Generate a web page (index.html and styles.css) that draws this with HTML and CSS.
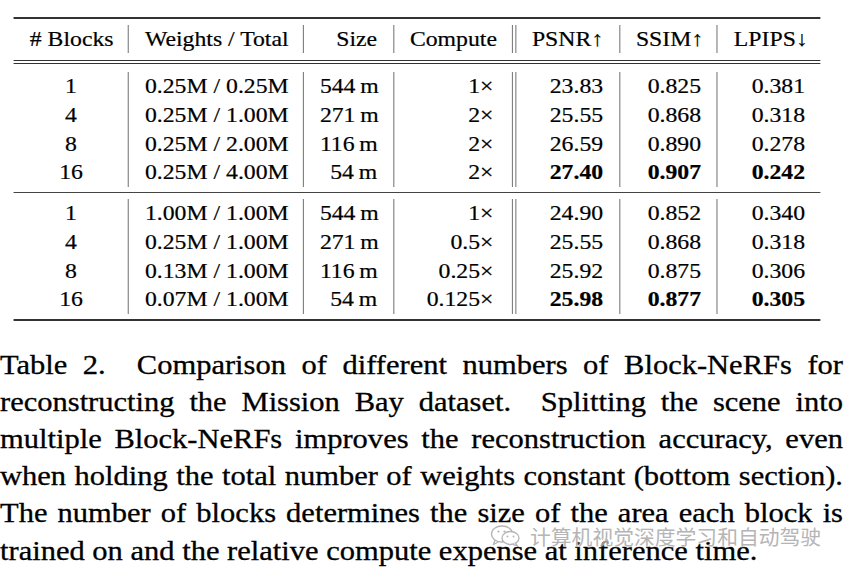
FILE: index.html
```html
<!DOCTYPE html>
<html lang="en">
<head>
<meta charset="utf-8">
<title>Table 2</title>
<link rel="stylesheet" href="styles.css">
</head>
<body>
<div class="page">
  <div class="tbl">
    <div class="rule-top"></div>
    <div class="sect sect-head">
      <div class="row">
        <div class="c c1">#&nbsp;Blocks</div>
        <div class="c c2">Weights / Total</div>
        <div class="c c3">Size</div>
        <div class="c c4">Compute</div>
        <div class="c c5">PSNR↑</div>
        <div class="c c6">SSIM↑</div>
        <div class="c c7">LPIPS↓</div>
      </div>
    </div>
    <div class="rule-double"></div>
    <div class="sect sect-a">
      <div class="row">
        <div class="c c1">1</div><div class="c c2">0.25M / 0.25M</div><div class="c c3">544&#8201;m</div><div class="c c4">1×</div><div class="c c5">23.83</div><div class="c c6">0.825</div><div class="c c7">0.381</div>
      </div>
      <div class="row">
        <div class="c c1">4</div><div class="c c2">0.25M / 1.00M</div><div class="c c3">271&#8201;m</div><div class="c c4">2×</div><div class="c c5">25.55</div><div class="c c6">0.868</div><div class="c c7">0.318</div>
      </div>
      <div class="row">
        <div class="c c1">8</div><div class="c c2">0.25M / 2.00M</div><div class="c c3">116&#8201;m</div><div class="c c4">2×</div><div class="c c5">26.59</div><div class="c c6">0.890</div><div class="c c7">0.278</div>
      </div>
      <div class="row">
        <div class="c c1">16</div><div class="c c2">0.25M / 4.00M</div><div class="c c3">54&#8201;m</div><div class="c c4">2×</div><div class="c c5 b">27.40</div><div class="c c6 b">0.907</div><div class="c c7 b">0.242</div>
      </div>
    </div>
    <div class="rule-mid"></div>
    <div class="sect sect-b">
      <div class="row">
        <div class="c c1">1</div><div class="c c2">1.00M / 1.00M</div><div class="c c3">544&#8201;m</div><div class="c c4">1×</div><div class="c c5">24.90</div><div class="c c6">0.852</div><div class="c c7">0.340</div>
      </div>
      <div class="row">
        <div class="c c1">4</div><div class="c c2">0.25M / 1.00M</div><div class="c c3">271&#8201;m</div><div class="c c4">0.5×</div><div class="c c5">25.55</div><div class="c c6">0.868</div><div class="c c7">0.318</div>
      </div>
      <div class="row">
        <div class="c c1">8</div><div class="c c2">0.13M / 1.00M</div><div class="c c3">116&#8201;m</div><div class="c c4">0.25×</div><div class="c c5">25.92</div><div class="c c6">0.875</div><div class="c c7">0.306</div>
      </div>
      <div class="row">
        <div class="c c1">16</div><div class="c c2">0.07M / 1.00M</div><div class="c c3">54&#8201;m</div><div class="c c4">0.125×</div><div class="c c5 b">25.98</div><div class="c c6 b">0.877</div><div class="c c7 b">0.305</div>
      </div>
    </div>
    <div class="rule-bottom"></div>
  </div>
  <p class="caption">Table 2.&nbsp; Comparison of different numbers of Block-NeRFs for reconstructing the Mission Bay dataset.&nbsp; Splitting the scene into multiple Block-NeRFs improves the reconstruction accuracy, even when holding the total number of weights constant (bottom section). The number of blocks determines the size of the area each block is trained on and the relative compute expense at inference time.</p>
</div>
<div class="watermark">
  <svg class="wm-icon" width="32" height="22" viewBox="0 0 32 22" aria-hidden="true">
    <ellipse cx="12" cy="9" rx="10.5" ry="8" fill="none" stroke="#a8a8a8" stroke-width="1.3"/>
    <path d="M5 15 L3.5 19.5 L9 16.5" fill="none" stroke="#a8a8a8" stroke-width="1.3"/>
    <ellipse cx="20.5" cy="13" rx="8.5" ry="6.5" fill="#fff" stroke="#a8a8a8" stroke-width="1.3"/>
    <path d="M25.5 18 L27.5 21 L22.5 19.2" fill="#fff" stroke="#a8a8a8" stroke-width="1.3"/>
    <circle cx="8.5" cy="6.5" r="1.1" fill="#a8a8a8"/>
    <circle cx="14.5" cy="6.5" r="1.1" fill="#a8a8a8"/>
    <circle cx="17.5" cy="11.5" r="0.9" fill="#a8a8a8"/>
    <circle cx="23.5" cy="11.5" r="0.9" fill="#a8a8a8"/>
  </svg>
  <span class="wm-text">计算机视觉深度学习和自动驾驶</span>
</div>
</body>
</html>
```
FILE: styles.css
```css
html, body {
  margin: 0;
  padding: 0;
  background: #fff;
}
body {
  position: relative;
  width: 850px;
  height: 576px;
  overflow: hidden;
  font-family: "Liberation Serif", "Times New Roman", serif;
  color: #000;
}
.page {
  width: 746px;
  padding-top: 17px;
  transform: scaleX(1.13);
  transform-origin: 0 0;
}
.tbl {
  margin-left: 12.4px;
  width: 714px;
  font-size: 21px;
  -webkit-text-stroke: 0.2px #000;
}
.rule-top, .rule-bottom {
  border-top: 2px solid #333;
}
.rule-mid {
  border-top: 1px solid #444;
}
.rule-double {
  height: 2px;
  border-top: 1px solid #333;
  border-bottom: 1px solid #333;
}
.sect-head { padding: 6px 0 7px; }
.sect-a { padding: 8px 0 5px; }
.sect-b { padding: 6px 0 5px; }
.row {
  display: grid;
  grid-template-columns: 100.9px 154.8px 79.7px 104.9px 95.1px 86.7px 92px;
}
.sect-head .row { height: 28px; line-height: 28px; }
.sect-a .row, .sect-b .row { height: 28.75px; line-height: 28.75px; }
.c {
  box-sizing: border-box;
  padding: 0 14px;
  text-align: right;
  white-space: nowrap;
}
.c1, .c2 { text-align: center; }
.c2, .c3, .c4, .c6, .c7 { border-left: 1px solid #808080; }
.c5 { border-left: 4px double #808080; }
.c4 { padding-right: 16px; }
.b { font-weight: bold; }
.caption {
  margin: 25.6px 0 0;
  font-size: 27px;
  line-height: 37.2px;
  text-align: justify;
  color: #000;
  -webkit-text-stroke: 0.3px #000;
}
.watermark {
  position: absolute;
  left: 490px;
  top: 523px;
  display: flex;
  align-items: center;
  gap: 8px;
  opacity: 0.85;
}
.wm-icon { display: block; }
.wm-text {
  font-family: "Noto Sans CJK SC", sans-serif;
  font-size: 20.8px;
  line-height: 26px;
  color: #a9a9a9;
  text-shadow: 0 0 1px #fff, 0 0 2px #fff;
}
```
